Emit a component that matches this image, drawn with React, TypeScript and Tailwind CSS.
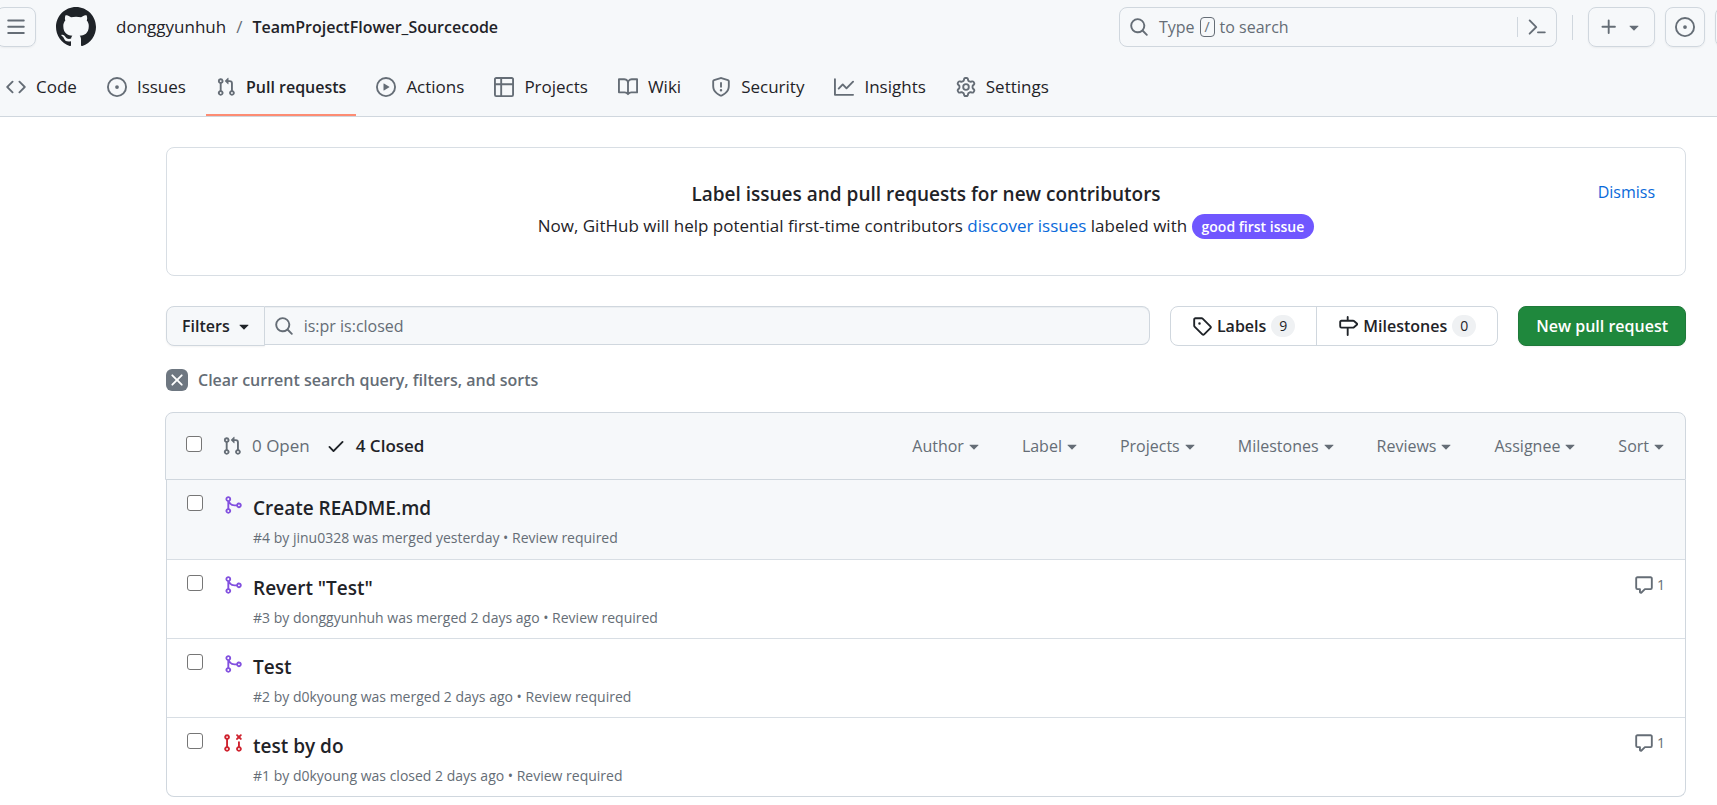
import type { ReactNode } from 'react';

const ICONS = {
  menu: 'M1 2.75A.75.75 0 0 1 1.75 2h12.5a.75.75 0 0 1 0 1.5H1.75A.75.75 0 0 1 1 2.75Zm0 5A.75.75 0 0 1 1.75 7h12.5a.75.75 0 0 1 0 1.5H1.75A.75.75 0 0 1 1 7.75ZM1.75 12h12.5a.75.75 0 0 1 0 1.5H1.75a.75.75 0 0 1 0-1.5Z',
  github:
    'M8 0c4.42 0 8 3.58 8 8a8.013 8.013 0 0 1-5.45 7.59c-.4.08-.55-.17-.55-.38 0-.27.01-1.13.01-2.2 0-.75-.25-1.23-.54-1.48 1.78-.2 3.65-.88 3.65-3.95 0-.88-.31-1.59-.82-2.15.08-.2.36-1.02-.08-2.12 0 0-.67-.22-2.2.82-.64-.18-1.32-.27-2-.27-.68 0-1.36.09-2 .27-1.53-1.03-2.2-.82-2.2-.82-.44 1.1-.16 1.92-.08 2.12-.51.56-.82 1.28-.82 2.15 0 3.06 1.86 3.75 3.64 3.95-.23.2-.44.55-.51 1.07-.46.21-1.61.55-2.33-.66-.15-.24-.6-.83-1.23-.82-.67.01-.27.38.01.53.34.19.73.9.82 1.13.16.45.68 1.31 2.69.94 0 .67.01 1.3.01 1.49 0 .21-.15.45-.55.38A7.995 7.995 0 0 1 0 8c0-4.42 3.58-8 8-8Z',
  search:
    'M10.68 11.74a6 6 0 0 1-7.922-8.982 6 6 0 0 1 8.982 7.922l3.04 3.04a.749.749 0 0 1-.326 1.275.749.749 0 0 1-.734-.215ZM11.5 7a4.499 4.499 0 1 0-8.997 0A4.499 4.499 0 0 0 11.5 7Z',
  terminal:
    'm6.354 8.04-4.773 4.773a.75.75 0 1 0 1.061 1.06L7.945 8.57a.75.75 0 0 0 0-1.06L2.642 2.206a.75.75 0 0 0-1.06 1.061L6.353 8.04ZM8.75 11.5a.75.75 0 0 0 0 1.5h5.5a.75.75 0 0 0 0-1.5h-5.5Z',
  plus: 'M7.75 2a.75.75 0 0 1 .75.75V7h4.25a.75.75 0 0 1 0 1.5H8.5v4.25a.75.75 0 0 1-1.5 0V8.5H2.75a.75.75 0 0 1 0-1.5H7V2.75A.75.75 0 0 1 7.75 2Z',
  caret: 'm4.427 7.427 3.396 3.396a.25.25 0 0 0 .354 0l3.396-3.396A.25.25 0 0 0 11.396 7H4.604a.25.25 0 0 0-.177.427Z',
  code: 'm11.28 3.22 4.25 4.25a.75.75 0 0 1 0 1.06l-4.25 4.25a.749.749 0 0 1-1.275-.326.749.749 0 0 1 .215-.734L13.94 8l-3.72-3.72a.749.749 0 0 1 .326-1.275.749.749 0 0 1 .734.215Zm-6.56 0a.751.751 0 0 1 1.042.018.751.751 0 0 1 .018 1.042L2.06 8l3.72 3.72a.749.749 0 0 1-.326 1.275.749.749 0 0 1-.734-.215L.47 8.53a.75.75 0 0 1 0-1.06Z',
  issue:
    'M8 9.5a1.5 1.5 0 1 0 0-3 1.5 1.5 0 0 0 0 3ZM8 0a8 8 0 1 1 0 16A8 8 0 0 1 8 0ZM1.5 8a6.5 6.5 0 1 0 13 0 6.5 6.5 0 0 0-13 0Z',
  pull: 'M1.5 3.25a2.25 2.25 0 1 1 3 2.122v5.256a2.251 2.251 0 1 1-1.5 0V5.372A2.25 2.25 0 0 1 1.5 3.25Zm5.677-.177L9.573.677A.25.25 0 0 1 10 .854V2.5h1A2.5 2.5 0 0 1 13.5 5v5.628a2.251 2.251 0 1 1-1.5 0V5a1 1 0 0 0-1-1h-1v1.646a.25.25 0 0 1-.427.177L7.177 3.427a.25.25 0 0 1 0-.354ZM3.75 2.5a.75.75 0 1 0 0 1.5.75.75 0 0 0 0-1.5Zm0 9.5a.75.75 0 1 0 0 1.5.75.75 0 0 0 0-1.5Zm8.25.75a.75.75 0 1 0 1.5 0 .75.75 0 0 0-1.5 0Z',
  play: 'M8 0a8 8 0 1 1 0 16A8 8 0 0 1 8 0ZM1.5 8a6.5 6.5 0 1 0 13 0 6.5 6.5 0 0 0-13 0Zm4.879-2.773 4.264 2.559a.25.25 0 0 1 0 .428l-4.264 2.559A.25.25 0 0 1 6 10.559V5.442a.25.25 0 0 1 .379-.215Z',
  table:
    'M0 1.75C0 .784.784 0 1.75 0h12.5C15.216 0 16 .784 16 1.75v12.5A1.75 1.75 0 0 1 14.25 16H1.75A1.75 1.75 0 0 1 0 14.25ZM6.5 6.5v8h7.75a.25.25 0 0 0 .25-.25V6.5Zm8-1.5V1.75a.25.25 0 0 0-.25-.25H6.5V5Zm-13 1.5v7.75c0 .138.112.25.25.25H5v-8ZM5 5V1.5H1.75a.25.25 0 0 0-.25.25V5Z',
  book: 'M0 1.75A.75.75 0 0 1 .75 1h4.253c1.227 0 2.317.59 3 1.501A3.743 3.743 0 0 1 11.006 1h4.245a.75.75 0 0 1 .75.75v10.5a.75.75 0 0 1-.75.75h-4.507a2.25 2.25 0 0 0-1.591.659l-.622.621a.75.75 0 0 1-1.06 0l-.622-.621A2.25 2.25 0 0 0 5.258 13H.75a.75.75 0 0 1-.75-.75Zm7.251 10.324.004-5.073-.002-2.253A2.25 2.25 0 0 0 5.003 2.5H1.5v9h3.757a3.75 3.75 0 0 1 1.994.574ZM8.755 4.75l-.004 7.322a3.752 3.752 0 0 1 1.992-.572H14.5v-9h-3.495a2.25 2.25 0 0 0-2.25 2.25Z',
  shield:
    'M7.467.133a1.748 1.748 0 0 1 1.066 0l5.25 1.68A1.75 1.75 0 0 1 15 3.48V7c0 1.566-.32 3.182-1.303 4.682-.983 1.498-2.585 2.813-5.032 3.855a1.697 1.697 0 0 1-1.33 0c-2.447-1.042-4.049-2.357-5.032-3.855C1.32 10.182 1 8.566 1 7V3.48a1.75 1.75 0 0 1 1.217-1.667Zm.61 1.429a.25.25 0 0 0-.153 0l-5.25 1.68a.25.25 0 0 0-.174.238V7c0 1.358.275 2.666 1.057 3.86.784 1.194 2.121 2.34 4.366 3.297a.196.196 0 0 0 .154 0c2.245-.956 3.582-2.104 4.366-3.298C13.225 9.666 13.5 8.36 13.5 7V3.48a.251.251 0 0 0-.174-.237l-5.25-1.68ZM8.75 4.75v3a.75.75 0 0 1-1.5 0v-3a.75.75 0 0 1 1.5 0ZM9 10.5a1 1 0 1 1-2 0 1 1 0 0 1 2 0Z',
  graph:
    'M1.5 1.75V13.5h13.75a.75.75 0 0 1 0 1.5H.75a.75.75 0 0 1-.75-.75V1.75a.75.75 0 0 1 1.5 0Zm14.28 2.53-5.25 5.25a.75.75 0 0 1-1.06 0L7 7.06 4.28 9.78a.751.751 0 0 1-1.042-.018.751.751 0 0 1-.018-1.042l3.25-3.25a.75.75 0 0 1 1.06 0L10 7.94l4.72-4.72a.751.751 0 0 1 1.042.018.751.751 0 0 1 .018 1.042Z',
  gear: 'M8 0a8.2 8.2 0 0 1 .701.031C9.444.095 9.99.645 10.16 1.29l.288 1.107c.018.066.079.158.212.224.231.114.454.243.668.386.123.082.233.09.299.071l1.103-.303c.644-.176 1.392.021 1.82.63.27.385.506.792.704 1.218.315.675.111 1.422-.364 1.891l-.814.806c-.049.048-.098.147-.088.294.016.257.016.515 0 .772-.01.147.038.246.088.294l.814.806c.475.469.679 1.216.364 1.891a7.977 7.977 0 0 1-.704 1.217c-.428.61-1.176.807-1.82.63l-1.102-.302c-.067-.019-.177-.011-.3.071a5.909 5.909 0 0 1-.668.386c-.133.066-.194.158-.211.224l-.29 1.106c-.168.646-.715 1.196-1.458 1.26a8.006 8.006 0 0 1-1.402 0c-.743-.064-1.289-.614-1.458-1.26l-.289-1.106c-.018-.066-.079-.158-.212-.224a5.738 5.738 0 0 1-.668-.386c-.123-.082-.233-.09-.299-.071l-1.103.303c-.644.176-1.392-.021-1.82-.63a8.12 8.12 0 0 1-.704-1.218c-.315-.675-.111-1.422.363-1.891l.815-.806c.05-.048.098-.147.088-.294a6.214 6.214 0 0 1 0-.772c.01-.147-.038-.246-.088-.294l-.815-.806C.635 6.045.431 5.298.746 4.623a7.92 7.92 0 0 1 .704-1.217c.428-.61 1.176-.807 1.82-.63l1.102.302c.067.019.177.011.3-.071.214-.143.437-.272.668-.386.133-.066.194-.158.211-.224l.29-1.106C6.009.645 6.556.095 7.299.03 7.53.01 7.764 0 8 0Zm-.571 1.525c-.036.003-.108.036-.137.146l-.289 1.105c-.147.561-.549.967-.998 1.189-.173.086-.34.183-.5.29-.417.278-.97.423-1.529.27l-1.103-.303c-.109-.03-.175.016-.195.045-.22.312-.412.644-.573.99-.014.031-.021.11.059.19l.815.806c.411.406.562.957.53 1.456a4.709 4.709 0 0 0 0 .582c.032.499-.119 1.05-.53 1.456l-.815.806c-.081.08-.073.159-.059.19.162.346.353.677.573.989.02.03.085.076.195.046l1.102-.303c.56-.153 1.113-.008 1.53.27.161.107.328.204.501.29.447.222.85.629.997 1.189l.289 1.105c.029.109.101.143.137.146a6.6 6.6 0 0 0 1.142 0c.036-.003.108-.036.137-.146l.289-1.105c.147-.561.549-.967.998-1.189.173-.086.34-.183.5-.29.417-.278.97-.423 1.529-.27l1.103.303c.109.029.175-.016.195-.045.22-.313.411-.644.573-.99.014-.031.021-.11-.059-.19l-.815-.806c-.411-.406-.562-.957-.53-1.456a4.709 4.709 0 0 0 0-.582c-.032-.499.119-1.05.53-1.456l.815-.806c.081-.08.073-.159.059-.19a6.464 6.464 0 0 0-.573-.989c-.02-.03-.085-.076-.195-.046l-1.102.303c-.56.153-1.113.008-1.53-.27a4.44 4.44 0 0 0-.501-.29c-.447-.222-.85-.629-.997-1.189l-.289-1.105c-.029-.11-.101-.143-.137-.146a6.6 6.6 0 0 0-1.142 0ZM11 8a3 3 0 1 1-6 0 3 3 0 0 1 6 0ZM9.5 8a1.5 1.5 0 1 0-3.001.001A1.5 1.5 0 0 0 9.5 8Z',
  tag: 'M1 7.775V2.75C1 1.784 1.784 1 2.75 1h5.025c.464 0 .91.184 1.238.513l6.25 6.25a1.75 1.75 0 0 1 0 2.474l-5.026 5.026a1.75 1.75 0 0 1-2.474 0l-6.25-6.25A1.752 1.752 0 0 1 1 7.775Zm1.5 0c0 .066.026.13.073.177l6.25 6.25a.25.25 0 0 0 .354 0l5.025-5.025a.25.25 0 0 0 0-.354l-6.25-6.25a.25.25 0 0 0-.177-.073H2.75a.25.25 0 0 0-.25.25ZM6 5a1 1 0 1 1 0 2 1 1 0 0 1 0-2Z',
  milestone:
    'M7.75 0a.75.75 0 0 1 .75.75V3h3.634c.414 0 .814.147 1.13.414l2.07 1.75a1.75 1.75 0 0 1 0 2.672l-2.07 1.75a1.75 1.75 0 0 1-1.13.414H8.5v5.25a.75.75 0 0 1-1.5 0V10H2.75A1.75 1.75 0 0 1 1 8.25v-3.5C1 3.784 1.784 3 2.75 3H7V.75A.75.75 0 0 1 7.75 0Zm4.384 8.5a.25.25 0 0 0 .161-.06l2.07-1.75a.248.248 0 0 0 0-.38l-2.07-1.75a.25.25 0 0 0-.161-.06H2.75a.25.25 0 0 0-.25.25v3.5c0 .138.112.25.25.25h9.384Z',
  close:
    'M3.72 3.72a.75.75 0 0 1 1.06 0L8 6.94l3.22-3.22a.749.749 0 0 1 1.275.326.749.749 0 0 1-.215.734L9.06 8l3.22 3.22a.749.749 0 0 1-.326 1.275.749.749 0 0 1-.734-.215L8 9.06l-3.22 3.22a.751.751 0 0 1-1.042-.018.751.751 0 0 1-.018-1.042L6.94 8 3.72 4.78a.75.75 0 0 1 0-1.06Z',
  check:
    'M13.78 4.22a.75.75 0 0 1 0 1.06l-7.25 7.25a.75.75 0 0 1-1.06 0L2.22 9.28a.751.751 0 0 1 .018-1.042.751.751 0 0 1 1.042-.018L6 10.94l6.72-6.72a.75.75 0 0 1 1.06 0Z',
  merged:
    'M5.45 5.154A4.25 4.25 0 0 0 9.25 7.5h1.378a2.251 2.251 0 1 1 0 1.5H9.25A5.734 5.734 0 0 1 5 7.123v3.505a2.25 2.25 0 1 1-1.5 0V5.372a2.25 2.25 0 1 1 1.95-.218ZM4.25 13.5a.75.75 0 1 0 0-1.5.75.75 0 0 0 0 1.5Zm8.5-4.5a.75.75 0 1 0 0-1.5.75.75 0 0 0 0 1.5ZM5 3.25a.75.75 0 1 0 0 .005V3.25Z',
  closed:
    'M3.25 1A2.25 2.25 0 0 1 4 5.372v5.256a2.251 2.251 0 1 1-1.5 0V5.372A2.251 2.251 0 0 1 3.25 1Zm9.5 5.5a.75.75 0 0 1 .75.75v3.378a2.251 2.251 0 1 1-1.5 0V7.25a.75.75 0 0 1 .75-.75Zm-2.03-5.273a.75.75 0 0 1 1.06 0l.97.97.97-.97a.748.748 0 0 1 1.265.332.75.75 0 0 1-.205.729l-.97.97.97.97a.751.751 0 0 1-.018 1.042.751.751 0 0 1-1.042.018l-.97-.97-.97.97a.749.749 0 0 1-1.275-.326.749.749 0 0 1 .215-.734l.97-.97-.97-.97a.75.75 0 0 1 0-1.06ZM2.5 3.25a.75.75 0 1 0 1.5 0 .75.75 0 0 0-1.5 0ZM3.25 12a.75.75 0 1 0 0 1.5.75.75 0 0 0 0-1.5Zm9.5 0a.75.75 0 1 0 0 1.5.75.75 0 0 0 0-1.5Z',
  comment:
    'M1 2.75C1 1.784 1.784 1 2.75 1h10.5c.966 0 1.75.784 1.75 1.75v7.5A1.75 1.75 0 0 1 13.25 12H9.06l-2.573 2.573A1.458 1.458 0 0 1 4 13.543V12H2.75A1.75 1.75 0 0 1 1 10.25Zm1.75-.25a.25.25 0 0 0-.25.25v7.5c0 .138.112.25.25.25h2a.75.75 0 0 1 .75.75v2.19l2.72-2.72a.749.749 0 0 1 .53-.22h4.5a.25.25 0 0 0 .25-.25v-7.5a.25.25 0 0 0-.25-.25Z',
};

type IconName = keyof typeof ICONS;

function Icon({ name, className = 'size-5' }: { name: IconName; className?: string }) {
  return (
    <svg viewBox="0 0 16 16" fill="currentColor" aria-hidden="true" className={`shrink-0 ${className}`}>
      <path d={ICONS[name]} />
    </svg>
  );
}

const TABS: { label: string; icon: IconName }[] = [
  { label: 'Code', icon: 'code' },
  { label: 'Issues', icon: 'issue' },
  { label: 'Pull requests', icon: 'pull' },
  { label: 'Actions', icon: 'play' },
  { label: 'Projects', icon: 'table' },
  { label: 'Wiki', icon: 'book' },
  { label: 'Security', icon: 'shield' },
  { label: 'Insights', icon: 'graph' },
  { label: 'Settings', icon: 'gear' },
];

const MENUS = ['Author', 'Label', 'Projects', 'Milestones', 'Reviews', 'Assignee', 'Sort'];

type Pull = { id: number; title: string; author: string; action: string; state: 'merged' | 'closed'; comments: number };

const PULLS: Pull[] = [
  { id: 4, title: 'Create README.md', author: 'jinu0328', action: 'was merged yesterday', state: 'merged', comments: 0 },
  { id: 3, title: 'Revert "Test"', author: 'donggyunhuh', action: 'was merged 2 days ago', state: 'merged', comments: 1 },
  { id: 2, title: 'Test', author: 'd0kyoung', action: 'was merged 2 days ago', state: 'merged', comments: 0 },
  { id: 1, title: 'test by do', author: 'd0kyoung', action: 'was closed 2 days ago', state: 'closed', comments: 1 },
];

function HeaderButton({ label, className = '', children }: { label: string; className?: string; children: ReactNode }) {
  return (
    <button
      type="button"
      aria-label={label}
      className={`flex h-10 shrink-0 items-center justify-center rounded-lg border border-[#d0d7de] text-[#656d76] shadow-xs ${className}`}
    >
      {children}
    </button>
  );
}

function Checkbox({ label }: { label: string }) {
  return (
    <input
      type="checkbox"
      aria-label={label}
      className="block size-4 shrink-0 appearance-none rounded-[3px] border border-[#767676] bg-white"
    />
  );
}

function Header() {
  return (
    <header className="overflow-hidden border-b border-[#d0d7de] bg-[#f6f8fa]">
      <div className="flex items-center pt-[7px]">
        <HeaderButton label="Open menu" className="-ml-1 w-10">
          <Icon name="menu" />
        </HeaderButton>
        <a href="#" aria-label="Homepage" className="ml-5">
          <Icon name="github" className="size-10" />
        </a>
        <nav aria-label="Breadcrumb" className="ml-5 flex items-baseline gap-2.5">
          <a href="#">donggyunhuh</a>
          <span className="text-[#656d76]">/</span>
          <a href="#" className="text-base font-semibold">TeamProjectFlower_Sourcecode</a>
        </nav>
        <div className="ml-auto flex h-10 w-[438px] items-center rounded-lg border border-[#d0d7de] text-[#656d76]">
          <button type="button" className="flex h-full flex-1 items-center pl-[9px] text-base">
            <Icon name="search" />
            <span className="ml-2.5">Type</span>
            <kbd className="mx-[5px] flex h-5 w-[15px] items-center justify-center rounded-[4px] border border-[#656d76] font-[inherit] text-sm">
              /
            </kbd>
            <span>to search</span>
          </button>
          <button
            type="button"
            aria-label="Command palette"
            className="flex h-5 items-center border-l border-[#d0d7de] px-[9px]"
          >
            <Icon name="terminal" />
          </button>
        </div>
        <div className="mx-[15px] h-[25px] w-px bg-[#d0d7de]" />
        <HeaderButton label="Create new" className="w-[67px] gap-[5px]">
          <Icon name="plus" />
          <Icon name="caret" />
        </HeaderButton>
        <HeaderButton label="Issues" className="ml-2.5 w-10">
          <Icon name="issue" />
        </HeaderButton>
        <HeaderButton label="Pull requests" className="-mr-[38px] ml-2.5 w-10">
          <Icon name="pull" />
        </HeaderButton>
      </div>
      <nav aria-label="Repository" className="flex gap-2.5 pt-3">
        {TABS.map((tab) => {
          const active = tab.label === 'Pull requests';
          return (
            <a
              key={tab.label}
              href="#"
              aria-current={active ? 'page' : undefined}
              className={`flex h-[57px] items-center gap-2.5 border-b-2 px-2.5 first:pl-1.5 ${
                active ? 'border-[#fd8c73] text-base font-semibold' : 'border-transparent'
              }`}
            >
              <Icon name={tab.icon} className="size-5 text-[#656d76]" />
              {tab.label}
            </a>
          );
        })}
      </nav>
    </header>
  );
}

function Banner() {
  return (
    <section className="relative rounded-lg border border-[#d8dee4] pt-8 pb-9 text-center">
      <h2 className="text-[19px] leading-7 font-semibold">Label issues and pull requests for new contributors</h2>
      <p className="mt-[5px] leading-[26px]">
        Now, GitHub will help potential first-time contributors{' '}
        <a href="#" className="text-[#0969da]">discover issues</a> labeled with{' '}
        <span className="inline-block rounded-full bg-[#7057ff] px-2.5 text-sm leading-[25px] font-semibold text-white">
          good first issue
        </span>
      </p>
      <button type="button" className="absolute top-8 right-[30px] text-base text-[#0969da]">
        Dismiss
      </button>
    </section>
  );
}

function CountLink({ icon, label, count }: { icon: IconName; label: string; count: number }) {
  return (
    <a href="#" className="flex items-center px-[21px] text-base font-semibold">
      <Icon name={icon} />
      <span className="ml-[5px]">{label}</span>
      <span className="ml-[5px] flex h-[22px] min-w-6 items-center justify-center rounded-full bg-[#eff1f3] text-sm font-medium">
        {count}
      </span>
    </a>
  );
}

function Toolbar() {
  return (
    <div className="mt-[30px] flex">
      <button
        type="button"
        className="flex h-10 items-center gap-1 rounded-l-lg border border-[#d0d7de] bg-[#f6f8fa] pr-2.5 pl-[15px] text-base font-semibold shadow-xs"
      >
        Filters
        <Icon name="caret" />
      </button>
      <label className="flex h-[39px] flex-1 items-center gap-2.5 rounded-r-lg border border-l-0 border-[#d0d7de] bg-[#f6f8fa] pl-[9px] text-[#656d76] shadow-[inset_0_1px_0_rgba(208,215,222,0.3)]">
        <Icon name="search" />
        <input
          type="text"
          aria-label="Search all pull requests"
          defaultValue="is:pr is:closed"
          className="min-w-0 flex-1 bg-transparent text-base outline-none"
        />
      </label>
      <div className="ml-5 flex h-10 divide-x divide-[#d0d7de] rounded-lg border border-[#d0d7de]">
        <CountLink icon="tag" label="Labels" count={9} />
        <CountLink icon="milestone" label="Milestones" count={0} />
      </div>
      <button
        type="button"
        className="ml-5 h-10 rounded-lg border border-[#1f793a] bg-[#1f883d] px-[17px] text-base font-semibold text-white shadow-xs"
      >
        New pull request
      </button>
    </div>
  );
}

function PullRow({ pull, highlighted }: { pull: Pull; highlighted: boolean }) {
  return (
    <li
      className={`flex items-start border-b border-[#d8dee4] px-5 pt-[15px] pb-2.5 first:pb-[11px] last:border-b-0 ${
        highlighted ? 'bg-[#f6f8fa]' : ''
      }`}
    >
      <Checkbox label={`Select ${pull.title}`} />
      <div className={`pl-5 ${pull.state === 'merged' ? 'text-[#8250df]' : 'text-[#cf222e]'}`}>
        <Icon name={pull.state} />
      </div>
      <div className="flex-1 pl-2.5">
        <a href="#" className="block text-[19px] leading-[26px] font-semibold">{pull.title}</a>
        <p className="mt-[7px] text-sm leading-5 text-[#656d76]">
          #{pull.id} by <a href="#">{pull.author}</a> {pull.action} • <a href="#">Review required</a>
        </p>
      </div>
      {pull.comments > 0 && (
        <a
          href="#"
          aria-label={`${pull.comments} comment`}
          className="flex items-center gap-[3px] text-sm text-[#656d76]"
        >
          <Icon name="comment" />
          {pull.comments}
        </a>
      )}
    </li>
  );
}

function PullList() {
  return (
    <section className="mt-5">
      <div className="-ml-px flex h-[68px] items-center rounded-t-lg border border-[#d0d7de] bg-[#f6f8fa] px-5">
        <div className="pb-1">
          <Checkbox label="Select all" />
        </div>
        <a href="#" className="ml-5 flex items-center gap-2.5 text-[#656d76]">
          <Icon name="pull" />
          0 Open
        </a>
        <a href="#" className="ml-4 flex items-center gap-2.5 font-semibold">
          <Icon name="check" />
          4 Closed
        </a>
        <div className="ml-auto flex gap-[42px] text-base">
          {MENUS.map((menu) => (
            <button key={menu} type="button" className="flex items-center text-[#656d76]">
              {menu}
              <Icon name="caret" className="-mr-1 size-5" />
            </button>
          ))}
        </div>
      </div>
      <ul className="rounded-b-lg border border-t-0 border-[#d0d7de]">
        {PULLS.map((pull, index) => (
          <PullRow key={pull.id} pull={pull} highlighted={index === 0} />
        ))}
      </ul>
    </section>
  );
}

export default function App() {
  return (
    <div className="min-h-screen bg-white font-['Open_Sans','Noto_Sans',sans-serif] text-[17px] leading-6 text-[#1f2328]">
      <Header />
      <main className="pt-[30px] pr-[31px] pb-2 pl-[166px]">
        <Banner />
        <Toolbar />
        <button type="button" className="mt-[22px] flex items-center gap-2.5 text-base font-semibold text-[#656d76]">
          <span className="flex size-[22px] items-center justify-center rounded-md bg-[#6e7781] text-white">
            <Icon name="close" />
          </span>
          Clear current search query, filters, and sorts
        </button>
        <PullList />
      </main>
    </div>
  );
}
